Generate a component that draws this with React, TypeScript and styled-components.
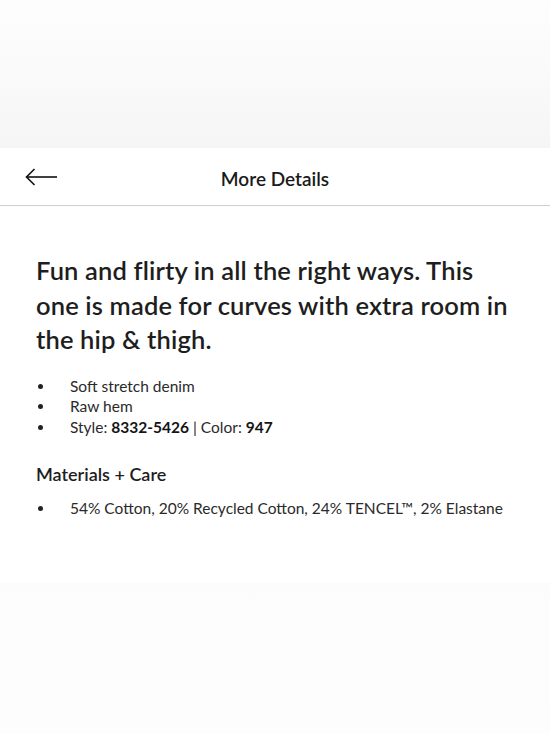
import styled, { createGlobalStyle } from "styled-components";

const Global = createGlobalStyle`
  html, body {
    margin: 0;
    padding: 0;
    background: #ffffff;
  }
  body {
    font-family: Lato, "Noto Sans", sans-serif;
    color: #1c1c1c;
    -webkit-font-smoothing: antialiased;
  }
`;

const Screen = styled.div`
  width: 550px;
  height: 733px;
  display: flex;
  flex-direction: column;
  overflow: hidden;
`;

// faded page behind the sheet
const Backdrop = styled.div`
  height: 148px;
  flex-shrink: 0;
  background: linear-gradient(to bottom, #fdfdfd 0%, #f9f9f9 60%, #f5f5f5 100%);
`;

const Sheet = styled.div`
  flex: 1;
  display: flex;
  flex-direction: column;
  background: #ffffff;
`;

const Header = styled.header`
  height: 57px;
  display: grid;
  grid-template-columns: 60px 1fr 60px;
  align-items: center;
  border-bottom: 1px solid #cfcfcf;
`;

const BackButton = styled.button`
  border: none;
  background: none;
  padding: 0 0 0 25px;
  height: 100%;
  display: flex;
  align-items: center;
  cursor: pointer;
`;

const Title = styled.h1`
  margin: 0;
  text-align: center;
  font-size: 19px;
  font-weight: 600;
  color: #1a1a1a;
  padding-top: 3px;
`;

const Body = styled.div`
  padding: 47px 36px 40px;
  flex: 1;
`;

const Lead = styled.p`
  margin: 0 0 19px;
  font-size: 25.5px;
  line-height: 34.5px;
  font-weight: 600;
  letter-spacing: 0.15px;
  color: #1e1e1e;
`;

const List = styled.ul`
  list-style: none;
  margin: 0;
  padding: 0;
`;

const Item = styled.li`
  position: relative;
  padding-left: 34px;
  font-size: 15.5px;
  line-height: 20.7px;
  color: #2a2a2a;

  &::before {
    content: "";
    position: absolute;
    left: 2px;
    top: 8px;
    width: 5px;
    height: 5px;
    border-radius: 50%;
    background: #222;
  }

  b {
    font-weight: 700;
    color: #151515;
  }
`;

const SectionTitle = styled.h2`
  margin: 25px 0 13px;
  font-size: 18px;
  font-weight: 600;
  color: #1e1e1e;
`;

const Footer = styled.div`
  height: 150px;
  flex-shrink: 0;
  background: linear-gradient(to bottom, #fcfcfc 0%, #fdfdfd 100%);
`;

function BackArrow() {
  return (
    <svg width="33" height="20" viewBox="0 0 33 20" fill="none">
      <path d="M1.5 10H32" stroke="#111" strokeWidth="1.6" />
      <path d="M9.5 2L1.5 10L9.5 18" stroke="#111" strokeWidth="1.6" strokeLinejoin="miter" />
    </svg>
  );
}

export default function App() {
  return (
    <>
      <Global />
      <Screen>
        <Backdrop />
        <Sheet>
          <Header>
            <BackButton aria-label="Back">
              <BackArrow />
            </BackButton>
            <Title>More Details</Title>
            <span />
          </Header>
          <Body>
            <Lead>
              Fun and flirty in all the right ways. This one is made for curves with extra room in
              the hip &amp; thigh.
            </Lead>
            <List>
              <Item>Soft stretch denim</Item>
              <Item>Raw hem</Item>
              <Item>
                Style: <b>8332-5426</b> | Color: <b>947</b>
              </Item>
            </List>
            <SectionTitle>Materials + Care</SectionTitle>
            <List>
              <Item>54% Cotton, 20% Recycled Cotton, 24% TENCEL™, 2% Elastane</Item>
            </List>
          </Body>
          <Footer />
        </Sheet>
      </Screen>
    </>
  );
}
